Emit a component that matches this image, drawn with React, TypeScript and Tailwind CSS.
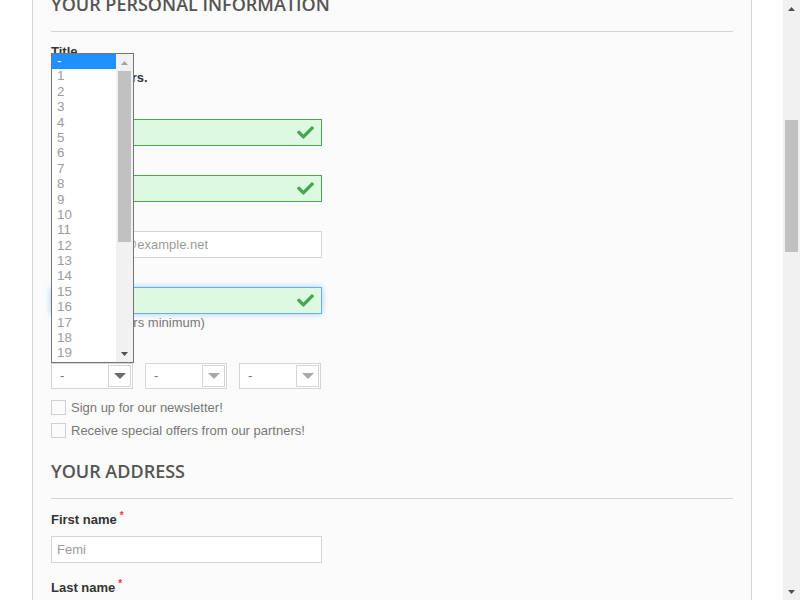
import React from "react";
import { FaCheck } from "react-icons/fa";

const Tri = ({ dir, color, w = 7, h = 4 }: { dir: "up" | "down"; color: string; w?: number; h?: number }) => (
  <svg width={w} height={h} viewBox={`0 0 ${w} ${h}`} className="block">
    {dir === "up" ? (
      <polygon points={`0,${h} ${w},${h} ${w / 2},0`} fill={color} />
    ) : (
      <polygon points={`0,0 ${w},0 ${w / 2},${h}`} fill={color} />
    )}
  </svg>
);

const Label = ({ text, req = true, cls = "" }: { text: string; req?: boolean; cls?: string }) => (
  <div className={`h-[18px] leading-[18px] text-[13px] font-bold text-[#333] ${cls}`}>
    {text}
    {req && <sup className="ml-[3px] text-[#f13340] text-[10px]">*</sup>}
  </div>
);

const OkInput = ({ focused = false }: { focused?: boolean }) => (
  <div
    className={`flex h-[27px] w-[271px] items-center justify-end border bg-[#ddf9e1] pr-[7px] ${
      focused ? "border-[#66afe9] shadow-[0_0_6px_rgba(102,175,233,0.6)]" : "border-[#46a74e]"
    }`}
  >
    <FaCheck className="text-[#46a74e]" size={17} />
  </div>
);

const Select = ({ dark = false }: { dark?: boolean }) => (
  <div className="flex h-[26px] w-[82px] items-center justify-between border border-[#d6d4d4] bg-white pl-[8px] pr-[1px]">
    <span className="text-[13px] text-[#777]">-</span>
    <div className="flex h-[22px] w-[23px] items-center justify-center border border-[#d6d4d4] bg-white">
      <Tri dir="down" color={dark ? "#6b6b6b" : "#a8a8a8"} w={12} h={6} />
    </div>
  </div>
);

const Check = ({ text, cls = "" }: { text: string; cls?: string }) => (
  <div className={`flex h-[15px] items-center ${cls}`}>
    <div className="h-[15px] w-[15px] border border-[#d0d0d0] bg-[#fbfbfb]" />
    <span className="ml-[5px] text-[13px] leading-[15px] text-[#777]">{text}</span>
  </div>
);

const Heading = ({ text, cls = "" }: { text: string; cls?: string }) => (
  <h3
    className={`border-b border-[#d6d4d4] pb-[16px] font-['Open_Sans',sans-serif] text-[18px] font-semibold uppercase leading-[22px] text-[#555454] ${cls}`}
  >
    {text}
  </h3>
);

export default function App() {
  const items = ["-", ...Array.from({ length: 31 }, (_, i) => String(i + 1))];
  return (
    <div className="flex h-[600px] w-[800px] overflow-hidden bg-white font-['Liberation_Sans',Arial,sans-serif]">
      <div className="relative h-[600px] w-[783px] overflow-hidden">
        <div className="ml-[32px] h-[640px] w-[720px] border-x border-[#d6d4d4] bg-[#fbfbfb] px-[18px]">
          <Heading text="Your personal information" cls="mt-[-7px]" />
          <Label text="Title" req={false} cls="mt-[11px]" />
          <div className="mt-[8px] flex h-[18px] items-center text-[13px] font-bold text-[#333]">
            <span>Mr.</span>
            <span className="ml-[51px]">Mrs.</span>
          </div>

          <Label text="First name" cls="mt-[7px]" />
          <div className="mt-[7px]"><OkInput /></div>

          <Label text="Last name" cls="mt-[4px]" />
          <div className="mt-[7px]"><OkInput /></div>

          <Label text="Email" cls="mt-[4px]" />
          <div className="mt-[7px] flex h-[27px] w-[271px] items-center border border-[#d6d4d4] bg-white pl-[7px] text-[13px] text-[#9c9b9b]">
            yourname1@example.net
          </div>

          <Label text="Password" cls="mt-[4px]" />
          <div className="mt-[7px]"><OkInput focused /></div>
          <div className="h-[18px] text-[13px] leading-[18px] text-[#777]">(Five characters minimum)</div>

          <Label text="Date of Birth" req={false} cls="mt-[6px]" />
          <div className="mt-[7px] flex gap-[12px]">
            <Select dark />
            <Select />
            <Select />
          </div>

          <Check text="Sign up for our newsletter!" cls="mt-[11px]" />
          <Check text="Receive special offers from our partners!" cls="mt-[8px]" />

          <Heading text="Your address" cls="mt-[22px]" />
          <Label text="First name" cls="mt-[12px]" />
          <div className="mt-[7px] flex h-[27px] w-[271px] items-center border border-[#d6d4d4] bg-white pl-[5px] text-[13px] text-[#9c9b9b]">
            Femi
          </div>
          <Label text="Last name" cls="mt-[16px]" />
          <div className="mt-[7px] h-[27px] w-[271px] border border-[#d6d4d4] bg-white" />
        </div>

        {/* open dropdown list */}
        <div className="absolute left-[51px] top-[53px] flex h-[310px] w-[83px] border border-[#767676] bg-white">
          <div className="h-[308px] flex-1 overflow-hidden">
            {items.map((it, i) => (
              <div
                key={it}
                className={`h-[15.4px] pl-[5px] text-[13.33px] leading-[14.4px] ${
                  i === 0 ? "bg-[#1e90ff] text-white" : "text-[#9c9b9b]"
                }`}
              >
                {it}
              </div>
            ))}
          </div>
          <div className="flex h-[308px] w-[17px] flex-col bg-[#f1f1f1]">
            <div className="flex h-[17px] items-center justify-center">
              <Tri dir="up" color="#a3a3a3" />
            </div>
            <div className="mx-[2px] h-[171px] bg-[#c1c1c1]" />
            <div className="flex-1" />
            <div className="flex h-[17px] items-center justify-center">
              <Tri dir="down" color="#505050" />
            </div>
          </div>
        </div>
      </div>

      {/* page scrollbar */}
      <div className="flex h-[600px] w-[17px] flex-col bg-[#f1f1f1]">
        <div className="flex h-[17px] items-center justify-center">
          <Tri dir="up" color="#505050" />
        </div>
        <div className="mx-[2px] mt-[103px] h-[132px] bg-[#c1c1c1]" />
        <div className="flex-1" />
        <div className="flex h-[17px] items-center justify-center">
          <Tri dir="down" color="#505050" />
        </div>
      </div>
    </div>
  );
}
